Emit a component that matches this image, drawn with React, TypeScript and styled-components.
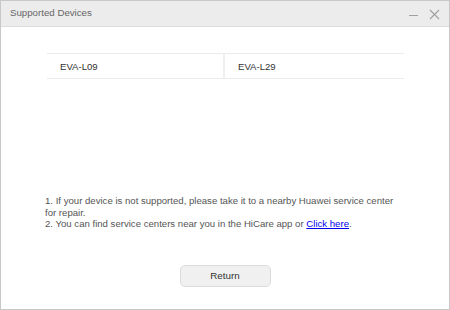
import React from 'react'
import styled, { createGlobalStyle } from 'styled-components'

const Global = createGlobalStyle`
  html, body { margin: 0; padding: 0; background: #fff; }
  body { font-family: "Liberation Sans", Arial, sans-serif; }
`

const devices = ['EVA-L09', 'EVA-L29']

const App = () => {
  return (
    <Window>
      <Global />
      <TitleBar>
        <Title>Supported Devices</Title>
        <Controls>
          <svg width="11" height="11" viewBox="0 0 11 11">
            <path d="M1 6.5h9" stroke="#a0a0a0" strokeWidth="1" />
          </svg>
          <svg width="11" height="11" viewBox="0 0 11 11">
            <path d="M1 1l9 9M10 1L1 10" stroke="#a0a0a0" strokeWidth="1.1" />
          </svg>
        </Controls>
      </TitleBar>
      <Body>
        <DeviceTable>
          {devices.map((d, i) => (
            <Cell key={d} first={i === 0}>{d}</Cell>
          ))}
        </DeviceTable>
        <Notes>
          1. If your device is not supported, please take it to a nearby Huawei service center for repair.
          <br />
          2. You can find service centers near you in the HiCare app or <Link href="#">Click here</Link>.
        </Notes>
        <Footer>
          <Button>Return</Button>
        </Footer>
      </Body>
    </Window>
  )
}

const Window = styled.div`
  width: 450px;
  height: 310px;
  box-sizing: border-box;
  border: 1px solid #c8c8c8;
  display: flex;
  flex-direction: column;
  background: #fff;
`

const TitleBar = styled.div`
  height: 25px;
  flex: none;
  background: #ececec;
  border-bottom: 1px solid #dcdcdc;
  display: flex;
  align-items: center;
  justify-content: space-between;
  padding: 0 9px;
`

const Title = styled.div`
  font-size: 9.7px;
  color: #666;
  margin-top: -3px;
`

const Controls = styled.div`
  display: flex;
  gap: 10px;
  align-items: center;
  margin-top: 2px;
`

const Body = styled.div`
  flex: 1;
  display: flex;
  flex-direction: column;
  padding: 26px 45px 0 46px;
`

const DeviceTable = styled.div`
  display: grid;
  grid-template-columns: 176px 1fr;
  border-top: 1px solid #ebebeb;
  border-bottom: 1px solid #ebebeb;
  height: 24px;
`

const Cell = styled.div<{ first?: boolean }>`
  font-size: 9.6px;
  color: #333;
  display: flex;
  align-items: center;
  padding-left: 13px;
  border-left: ${p => (p.first ? 'none' : '2px solid #efefef')};
`

const Notes = styled.div`
  margin: 116px 0 0 -2px;
  font-size: 9.6px;
  line-height: 11.5px;
  color: #555;
`

const Link = styled.a`
  color: #0000ee;
  text-decoration: underline;
`

const Footer = styled.div`
  display: flex;
  justify-content: center;
  margin-top: 35px;
`

const Button = styled.button`
  width: 91px;
  height: 22px;
  border: 1px solid #dcdcdc;
  border-radius: 5px;
  background: #f0f0f0;
  font-family: "Liberation Sans", Arial, sans-serif;
  font-size: 9.8px;
  color: #333;
  cursor: pointer;
  margin-left: -1px;
`

export default App
